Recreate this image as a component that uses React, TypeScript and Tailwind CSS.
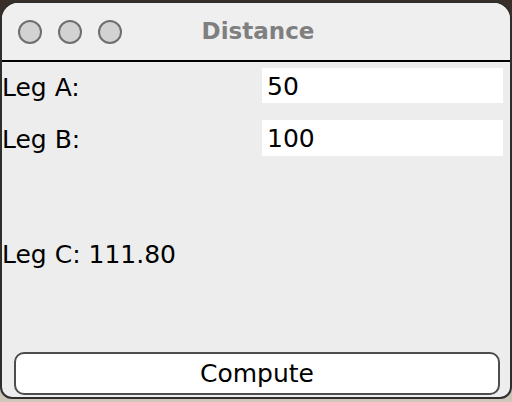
const font = { fontFamily: '"DejaVu Sans", "Liberation Sans", sans-serif' };

const Light = () => (
    <div className="w-[24px] h-[24px] rounded-full bg-[#d2d2d2] border-2 border-[#6f6f6f]" />
);

const App = () => {
    return (
        <div
            className="w-[512px] h-[402px] pt-[1px] bg-gradient-to-b from-[#3a2f28] via-[#4a4038] to-[#cfc7bb]"
            style={font}
        >
            <div className="h-[398px] flex flex-col border-2 border-[#2e2e2e] rounded-t-[18px] rounded-b-[12px] overflow-hidden bg-[#ededed]">
                {/* Title bar */}
                <div className="h-[59px] shrink-0 grid grid-cols-[1fr_auto_1fr] items-center bg-[#efefef] border-b-2 border-black">
                    <div className="flex gap-[16px] pl-[16px]">
                        <Light />
                        <Light />
                        <Light />
                    </div>
                    <div className="text-[23px] font-bold text-[#7f7f7f] pl-[4px]">Distance</div>
                    <div />
                </div>

                {/* Form */}
                <div className="flex-1 flex flex-col text-[25px] text-black">
                    <div className="flex mt-[6px] h-[35px]">
                        <div className="w-[260px] leading-[35px] mt-[2px]">Leg A:</div>
                        <div className="w-[241px] h-[35px] bg-white pl-[5px] leading-[35px] pt-[1px]">50</div>
                    </div>
                    <div className="flex mt-[17px] h-[36px]">
                        <div className="w-[260px] leading-[35px] mt-[2px]">Leg B:</div>
                        <div className="w-[241px] h-[36px] bg-white pl-[5px] leading-[35px] pt-[1px]">100</div>
                    </div>
                    <div className="mt-[81px] h-[35px] leading-[35px]">Leg C: 111.80</div>

                    <div className="flex-1" />

                    <div className="pl-[12px] pr-[10px] mb-[2px]">
                        <button className="w-full h-[43px] bg-white border-2 border-[#4d4d4d] rounded-[10px] leading-[39px] text-[25px]">
                            Compute
                        </button>
                    </div>
                </div>
            </div>
        </div>
    );
};

export default App;
